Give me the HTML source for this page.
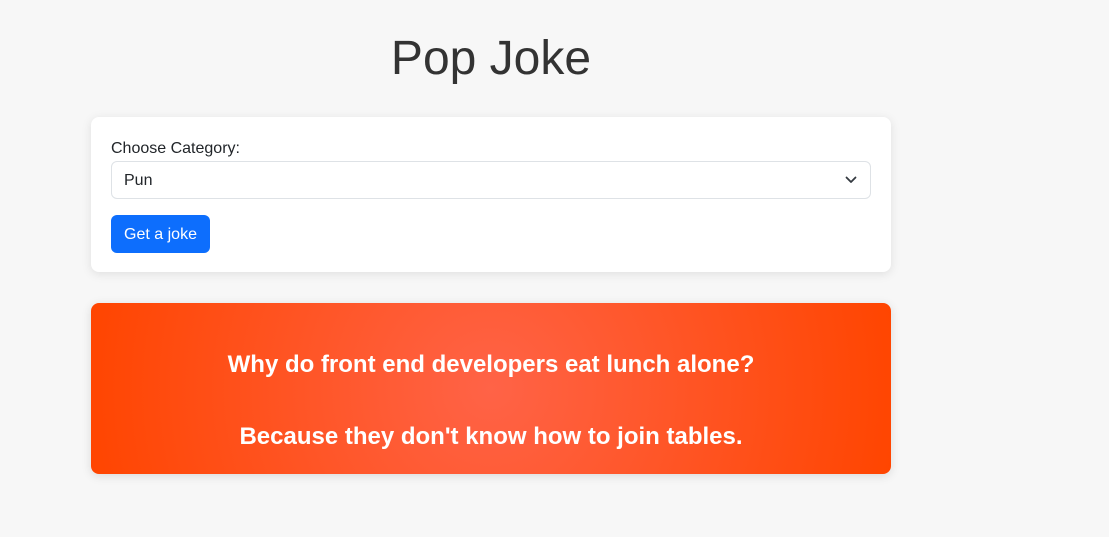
<!DOCTYPE html>
<html><head><style>
*{box-sizing:border-box}
body{margin:0;background:#f7f7f7;font-family:"Liberation Sans",Arial,sans-serif;width:1109px;height:537px;overflow:hidden}
.wrap{position:absolute;left:91px;width:800px;top:0}
h1{margin:0;position:absolute;top:29px;left:0;width:800px;text-align:center;font-weight:400;font-size:48px;line-height:60px;color:#333}
.card{position:absolute;top:117px;left:0;width:800px;height:155px;background:#fff;border-radius:8px;box-shadow:0 2px 10px rgba(0,0,0,.1);padding:0 20px}
label{position:absolute;top:23px;left:20px;font-size:16px;color:#212529}
.sel{position:absolute;top:44px;left:20px;width:760px;height:38px;border:1px solid #dee2e6;border-radius:6px;font-size:16px;color:#212529;padding:10px 12px;line-height:18px}
.sel svg{position:absolute;right:13px;top:14px}
.btn{position:absolute;top:98px;left:20px;width:99px;height:38px;background:#0d6efd;color:#fff;border-radius:6px;font-size:16px;line-height:39px;text-align:center}
.joke{position:absolute;top:303px;left:0;width:800px;height:171px;border-radius:8px;background:radial-gradient(circle at 50% 50%,#ff6347 0%,#ff4500 100%);box-shadow:0 2px 10px rgba(0,0,0,.12);color:#fff;font-weight:700;font-size:24px;text-align:center}
.joke p{margin:0;position:absolute;width:100%;line-height:28px}
</style></head><body>
<div class="wrap">
<h1>Pop Joke</h1>
<div class="card">
<label>Choose Category:</label>
<div class="sel">Pun<svg width="12" height="8" viewBox="0 0 12 8"><path d="M1.5 1.5l4.5 4.5 4.5-4.5" fill="none" stroke="#343a40" stroke-width="1.8" stroke-linecap="round" stroke-linejoin="round"/></svg></div>
<div class="btn">Get a joke</div>
</div>
<div class="joke">
<p style="top:48px">Why do front end developers eat lunch alone?</p>
<p style="top:120px">Because they don't know how to join tables.</p>
</div>
</div>
</body></html>
